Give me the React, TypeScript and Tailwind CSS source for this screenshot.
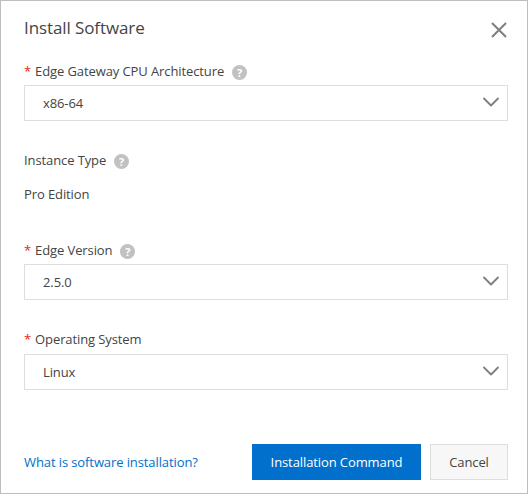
import { ChevronDown } from 'lucide-react'

const font = { fontFamily: '"Open Sans", sans-serif' }

function Help() {
  return (
    <span className="flex h-[15px] w-[15px] items-center justify-center rounded-full bg-[#c1c1c1] text-[11px] font-bold leading-none text-white">
      ?
    </span>
  )
}

function Label({ text, required, help }: { text: string; required?: boolean; help?: boolean }) {
  return (
    <div className="flex h-5 items-center text-[13px] tracking-[-0.1px] text-[#444444]">
      {required && <span className="mr-[4px] text-[#e62412]">*</span>}
      <span>{text}</span>
      {help && <span className="ml-[8px]"><Help /></span>}
    </div>
  )
}

function Select({ value, gap = 'mt-[3px]' }: { value: string; gap?: string }) {
  return (
    <div className={`${gap} flex h-9 items-center justify-between border border-[#dedede] pl-[18px] pr-[2px] text-[13px] tracking-[-0.1px] text-[#444444]`}>
      <span className="pt-[2px]">{value}</span>
      <ChevronDown className="mb-[2px] h-7 w-7 text-[#7f7f7f]" strokeWidth={1.6} />
    </div>
  )
}

export default function App() {
  return (
    <div
      className="flex h-[494px] w-[528px] flex-col border border-[#bdbdbd] bg-white pl-[23px] pr-[19px]"
      style={font}
    >
      <div className="flex h-[60px] items-center justify-between pb-[3px]">
        <h1 className="mb-[3px] text-[17px] tracking-[-0.1px] text-[#444444]">Install Software</h1>
        <svg viewBox="0 0 16 16" className="mr-px h-4 w-4 text-[#7f7f7f]" fill="none" stroke="currentColor" strokeWidth={2}>
          <path d="M1 1l14 14M15 1L1 15" />
        </svg>
      </div>

      <div className="mt-[1px]">
        <Label text="Edge Gateway CPU Architecture" required help />
        <Select value="x86-64" />
      </div>

      <div className="mt-[30px]">
        <Label text="Instance Type" help />
        <div className="mt-[14px] flex h-5 items-center text-[13px] tracking-[-0.1px] text-[#444444]">Pro Edition</div>
      </div>

      <div className="mt-[36px]">
        <Label text="Edge Version" required help />
        <Select value="2.5.0" />
      </div>

      <div className="mt-[30px]">
        <Label text="Operating System" required />
        <Select value="Linux" gap="mt-[4px]" />
      </div>

      <div className="mt-[54px] flex items-center">
        <a className="pt-[2px] text-[13px] tracking-[-0.1px] text-[#0070cc]">What is software installation?</a>
        <button className="ml-auto h-9 w-[169px] bg-[#0070cc] pt-px text-[13px] font-medium tracking-[-0.1px] text-white">
          Installation Command
        </button>
        <button className="ml-[9px] h-9 w-[78px] border border-[#dedede] bg-[#f7f7f7] pt-px text-[13px] tracking-[-0.1px] text-[#444444]">
          Cancel
        </button>
      </div>
    </div>
  )
}
